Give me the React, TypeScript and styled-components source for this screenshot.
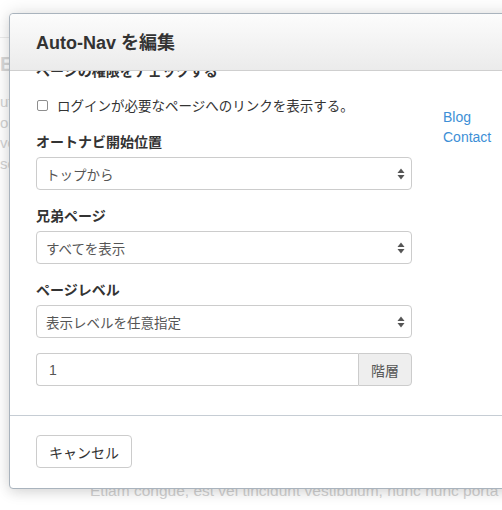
import React, { useLayoutEffect, useRef } from "react";
import styled, { createGlobalStyle } from "styled-components";

const GlobalStyle = createGlobalStyle`
  html, body {
    margin: 0;
    padding: 0;
    background: #ffffff;
    overflow: hidden;
  }
  * { box-sizing: border-box; }
`;

const SANS = `"Liberation Sans", "Noto Sans CJK JP", Arial, sans-serif`;
const JP = `"Noto Sans CJK JP", "Liberation Sans", sans-serif`;

const Page = styled.div`
  position: relative;
  width: 502px;
  height: 510px;
  overflow: hidden;
  font-family: ${SANS};
  color: #333;
`;

/* The page that sits behind the editor dialog */
const Backdrop = styled.div`
  height: 510px;
  display: flex;
  flex-direction: column;
  color: #d2d2d2;
  font-family: ${SANS};
`;

const BgRule = styled.div`
  margin-top: 37px;
  border-top: 1px solid #ececec;
`;

const BgHeading = styled.div`
  margin-top: 14px;
  font-size: 20px;
  font-weight: bold;
  line-height: 24px;
  color: #d8d8d8;
`;

const BgLines = styled.div`
  margin-top: 16px;
  font-size: 15px;
  line-height: 20.5px;
`;

const BgFoot = styled.div`
  margin-top: auto;
  margin-bottom: 9px;
  padding-left: 90px;
  font-size: 15.5px;
  line-height: 20px;
  white-space: nowrap;
  overflow: hidden;
`;

const Dialog = styled.div`
  position: absolute;
  left: 9px;
  top: 13px;
  width: 620px;
  background: #fff;
  border: 1px solid #a9b3bd;
  border-radius: 4px;
  box-shadow: 0 0 18px rgba(0, 0, 0, 0.13), 0 4px 12px rgba(0, 0, 0, 0.08);
  display: flex;
  flex-direction: column;
`;

const Header = styled.div`
  height: 57px;
  padding: 0 26px;
  display: flex;
  align-items: center;
  background: linear-gradient(#fcfcfc, #ebebeb);
  border-bottom: 1px solid #cfcfcf;
  border-radius: 4px 4px 0 0;
`;

const Title = styled.h3`
  margin: 0;
  font-family: ${SANS};
  font-size: 18px;
  font-weight: bold;
  color: #333;
  line-height: 24px;
  padding-top: 1px;
`;

const Body = styled.div`
  height: 344px;
  overflow-y: auto;
  scrollbar-width: none;
  padding: 20px 26px 60px;
  display: flex;
  align-items: flex-start;
  &::-webkit-scrollbar { display: none; }
`;

const FormCol = styled.div`
  width: 376px;
  flex: none;
  display: flex;
  flex-direction: column;
`;

const Section = styled.div`
  font-family: ${JP};
  font-size: 14px;
  font-weight: bold;
  line-height: 20px;
  color: #333;
  margin-bottom: 15px;
`;

const CheckRow = styled.label`
  display: flex;
  align-items: center;
  gap: 9px;
  height: 20px;
  margin-bottom: 16px;
  padding-left: 1px;
  font-family: ${JP};
  font-size: 13.5px;
  color: #333;
`;

const Check = styled.input`
  appearance: none;
  margin: 0;
  width: 11px;
  height: 11px;
  border: 1px solid #8e8e8e;
  border-radius: 2px;
  background: #fff;
`;

const Group = styled.div`
  display: flex;
  flex-direction: column;
  margin-bottom: 15px;
`;

const Label = styled.div`
  font-family: ${JP};
  font-size: 14px;
  font-weight: bold;
  line-height: 20px;
  color: #333;
  margin-bottom: 6px;
`;

const SelectBox = styled.div`
  height: 33px;
  border: 1px solid #cccccc;
  border-radius: 4px;
  background: #fff;
  display: flex;
  align-items: center;
  justify-content: space-between;
  padding: 0 6px 0 9px;
  font-family: ${JP};
  font-size: 13.5px;
  color: #555;
`;

const InputGroup = styled.div`
  display: flex;
  height: 33px;
`;

const TextInput = styled.div`
  flex: 1;
  border: 1px solid #cccccc;
  border-right: none;
  border-radius: 4px 0 0 4px;
  display: flex;
  align-items: center;
  padding-left: 12px;
  font-family: ${SANS};
  font-size: 14px;
  color: #555;
`;

const Addon = styled.div`
  width: 54px;
  border: 1px solid #cccccc;
  border-radius: 0 4px 4px 0;
  background: #eeeeee;
  display: flex;
  align-items: center;
  justify-content: center;
  font-family: ${JP};
  font-size: 14px;
  color: #555;
`;

const LinkCol = styled.div`
  margin-left: 31px;
  margin-top: 47px;
  display: flex;
  flex-direction: column;
`;

const NavLink = styled.a`
  font-family: ${SANS};
  font-size: 14px;
  line-height: 20px;
  color: #3d8fd6;
  text-decoration: none;
`;

const Footer = styled.div`
  border-top: 1px solid #c6cdd4;
  padding: 19px 26px 20px;
  display: flex;
`;

const Button = styled.button`
  height: 33px;
  padding: 0 12px;
  border: 1px solid #cccccc;
  border-radius: 4px;
  background: #fff;
  font-family: ${JP};
  font-size: 14px;
  color: #333;
`;

const Arrows = () => (
  <svg width="8" height="12" viewBox="0 0 8 12">
    <path d="M4 0.5 L7.5 5 L0.5 5 Z" fill="#555" />
    <path d="M4 11.5 L7.5 7 L0.5 7 Z" fill="#555" />
  </svg>
);

const Select = ({ children }: { children: React.ReactNode }) => (
  <SelectBox>
    <span>{children}</span>
    <Arrows />
  </SelectBox>
);

export default function App() {
  const bodyRef = useRef<HTMLDivElement>(null);

  // The form panel is shown scrolled a little way down.
  useLayoutEffect(() => {
    if (bodyRef.current) bodyRef.current.scrollTop = 31;
  }, []);

  return (
    <Page>
      <GlobalStyle />
      <Backdrop>
        <BgRule />
        <BgHeading>E</BgHeading>
        <BgLines>
          <div>ut</div>
          <div>or</div>
          <div>ve</div>
          <div>se</div>
        </BgLines>
        <BgFoot>Etiam congue, est vel tincidunt vestibulum, nunc nunc porta n</BgFoot>
      </Backdrop>

      <Dialog>
        <Header>
          <Title>Auto-Nav を編集</Title>
        </Header>
        <Body ref={bodyRef}>
          <FormCol>
            <Section>ページの権限をチェックする</Section>
            <CheckRow>
              <Check type="checkbox" />
              <span>ログインが必要なページへのリンクを表示する。</span>
            </CheckRow>
            <Group>
              <Label>オートナビ開始位置</Label>
              <Select>トップから</Select>
            </Group>
            <Group>
              <Label>兄弟ページ</Label>
              <Select>すべてを表示</Select>
            </Group>
            <Group>
              <Label>ページレベル</Label>
              <Select>表示レベルを任意指定</Select>
            </Group>
            <InputGroup>
              <TextInput>1</TextInput>
              <Addon>階層</Addon>
            </InputGroup>
          </FormCol>
          <LinkCol>
            <NavLink>Blog</NavLink>
            <NavLink>Contact</NavLink>
          </LinkCol>
        </Body>
        <Footer>
          <Button>キャンセル</Button>
        </Footer>
      </Dialog>
    </Page>
  );
}
